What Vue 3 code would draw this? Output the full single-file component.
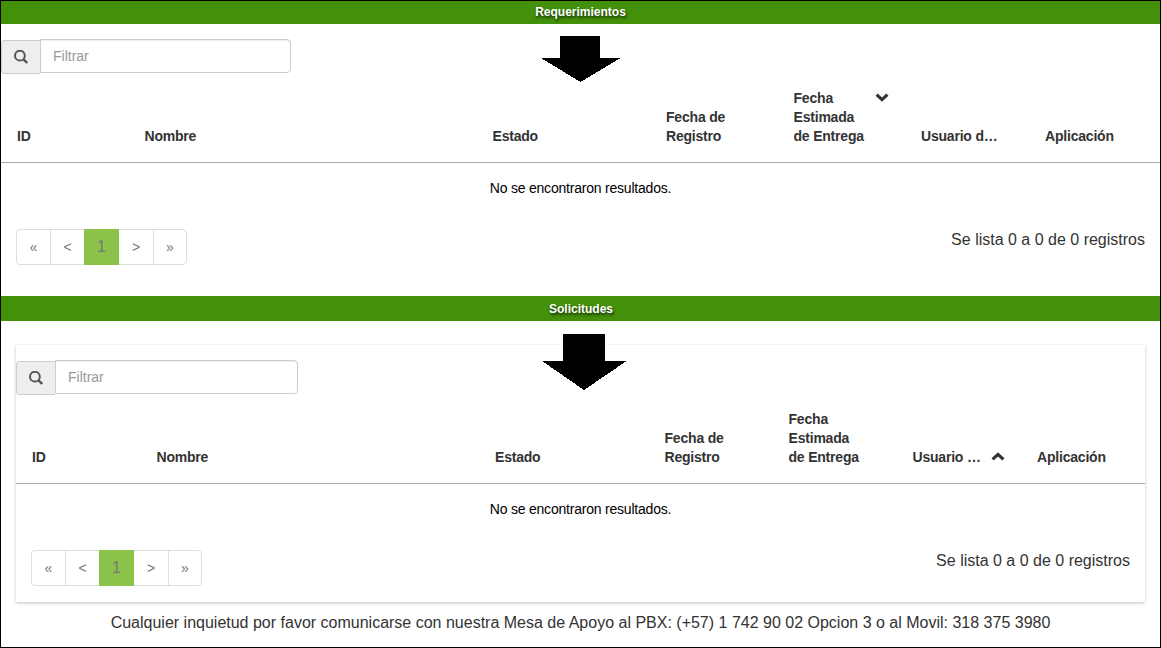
<script setup>
const sections = [
  {
    key: 'req',
    title: 'Requerimientos',
    columns: [
      { lines: ['ID'] },
      { lines: ['Nombre'] },
      { lines: ['Estado'] },
      { lines: ['Fecha de', 'Registro'] },
      { lines: ['Fecha', 'Estimada', 'de Entrega'], sort: 'down' },
      { lines: ['Usuario d…'] },
      { lines: ['Aplicación'] },
    ],
  },
  {
    key: 'sol',
    title: 'Solicitudes',
    columns: [
      { lines: ['ID'] },
      { lines: ['Nombre'] },
      { lines: ['Estado'] },
      { lines: ['Fecha de', 'Registro'] },
      { lines: ['Fecha', 'Estimada', 'de Entrega'] },
      { lines: ['Usuario …'], sort: 'up' },
      { lines: ['Aplicación'] },
    ],
  },
]
const pages = ['«', '<', '1', '>', '»']
</script>

<template>
  <main class="page">
    <section v-for="s in sections" :key="s.key" :class="['section', s.key]">
      <h2 class="bar">{{ s.title }}</h2>
      <svg v-if="s.key === 'req'" class="arrow" width="80" height="46" viewBox="0 0 80 46" shape-rendering="crispEdges">
        <path d="M19 0H59V22H79.500L39.500 46L0 22H19Z" />
      </svg>
      <svg v-else class="arrow" width="85" height="56" viewBox="0 0 85 56" shape-rendering="crispEdges">
        <path d="M21 0H63V27H84.500L42 56L0 27H21Z" />
      </svg>
      <div class="panel">
        <div class="filter">
          <span class="addon">
            <svg width="14" height="14" viewBox="0 0 14 14">
              <circle cx="5.900" cy="5.700" r="4.900" fill="none" stroke="#555" stroke-width="2" />
              <path d="M9.200 9.200L13.200 13" stroke="#555" stroke-width="2.400" />
            </svg>
          </span>
          <input type="text" placeholder="Filtrar" />
        </div>
        <div class="head">
          <div v-for="(c, i) in s.columns" :key="i" class="cell">
            <div>
              <div v-for="l in c.lines" :key="l">{{ l }}</div>
            </div>
            <svg v-if="c.sort" :class="['sort', c.sort]" width="14" height="9" viewBox="0 0 14 9">
              <path d="M1.600 1.600L7 6.600L12.400 1.600" fill="none" stroke="#333" stroke-width="3.200" />
            </svg>
          </div>
        </div>
        <p class="empty">No se encontraron resultados.</p>
        <div class="foot">
          <ul class="pager">
            <li v-for="p in pages" :key="p" :class="{ active: p === '1' }">{{ p }}</li>
          </ul>
          <span class="count">Se lista 0 a 0 de 0 registros</span>
        </div>
      </div>
    </section>
    <p class="contact">Cualquier inquietud por favor comunicarse con nuestra Mesa de Apoyo al PBX: (+57) 1 742 90 02 Opcion 3 o al Movil: 318 375 3980</p>
  </main>
</template>

<style>
body {
  margin: 0;
  background: #fff;
}
</style>

<style scoped>
* {
  box-sizing: border-box;
}
.page {
  width: 1161px;
  height: 648px;
  border: 1px solid #000;
  overflow: hidden;
  background: #fff;
  color: #333;
  font-family: "Liberation Sans", Arial, sans-serif;
}
.section {
  position: relative;
}
.bar {
  margin: 0;
  height: 23px;
  line-height: 22px;
  background: #43910b;
  color: #fff;
  font-size: 12px;
  font-weight: bold;
  text-align: center;
  text-shadow: 1px 2px 3px rgba(0, 0, 0, 0.75);
}
.sol .bar {
  height: 25px;
  line-height: 26px;
  padding-left: 1px;
}
.arrow {
  position: absolute;
  left: 540px;
  top: 35px;
  z-index: 1;
}
.sol .arrow {
  left: 541px;
  top: 38px;
}
.panel {
  height: 272px;
  padding-top: 15px;
}
.sol .panel {
  height: 257px;
  margin: 24px 15px 0;
  box-shadow: 0 1px 3px rgba(0, 0, 0, 0.25);
}
.filter {
  display: flex;
  width: 290px;
  height: 35px;
}
.sol .filter {
  width: 282px;
}
.addon {
  width: 39px;
  height: 34px;
  margin-top: 1px;
  display: flex;
  align-items: center;
  justify-content: center;
  border: 1px solid #ccc;
  border-right: 0;
  border-radius: 4px 0 0 4px;
  background: #eee;
}
input {
  flex: 1;
  min-width: 0;
  height: 34px;
  padding: 0 12px;
  border: 1px solid #ccc;
  border-radius: 0 4px 4px 0;
  box-shadow: inset 0 1px 1px rgba(0, 0, 0, 0.075);
  background: #fff;
  font: 14px "Liberation Sans", Arial, sans-serif;
}
input::placeholder {
  color: #999;
  opacity: 1;
}
.head {
  display: grid;
  grid-template-columns: 127.5px 348px 173.5px 127.5px 127.5px 124px 1fr;
  height: 89px;
  border-bottom: 1px solid #aaa;
  font-size: 14px;
  font-weight: bold;
  line-height: 19px;
  letter-spacing: -0.2px;
}
.sol .head {
  grid-template-columns: 124.5px 338.5px 169.5px 124px 124px 124.5px 1fr;
}
.cell {
  position: relative;
  display: flex;
  align-items: flex-end;
  padding: 0 0 16px 16px;
  white-space: nowrap;
}
.sort {
  position: absolute;
  left: 97px;
  top: 19px;
}
.sort.up {
  left: 94px;
  top: 57px;
  transform: scaleY(-1);
}
.empty {
  margin: 16px 0 0;
  height: 50px;
  line-height: 19px;
  color: #000;
  font-size: 14px;
  letter-spacing: -0.21px;
  text-align: center;
}
.foot {
  display: flex;
  justify-content: space-between;
  padding: 0 15px;
}
.pager {
  display: flex;
  width: 171px;
  height: 36px;
  margin: 0;
  padding: 0;
  list-style: none;
  border: 1px solid #ddd;
  border-radius: 4px;
  color: #777;
  font-size: 14px;
  line-height: 34px;
  text-align: center;
}
.pager li {
  width: 34px;
}
.pager li:first-child,
.pager li:nth-child(4) {
  border-right: 1px solid #ddd;
}
.pager li:nth-child(2) {
  width: 33px;
}
.pager li:nth-child(4) {
  width: 35px;
}
.pager li:last-child {
  width: 32px;
}
.pager .active {
  width: 35px;
  height: 36px;
  margin-top: -1px;
  background: #8bc34a;
  font-size: 16px;
  line-height: 35px;
}
.count {
  font-size: 16px;
  line-height: 22px;
}
.contact {
  margin: 9px 0 0;
  font-size: 16px;
  line-height: 24px;
  text-align: center;
}
</style>
